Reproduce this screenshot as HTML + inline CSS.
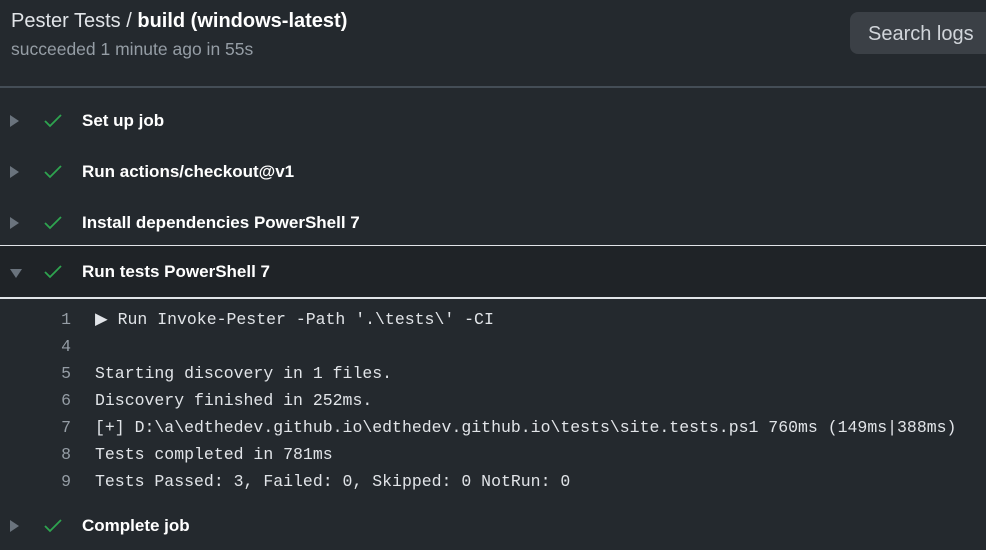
<!DOCTYPE html>
<html><head><style>
body{margin:0;width:986px;height:543px;background:#24292e;overflow:hidden;font-family:"Liberation Sans",sans-serif;position:relative}
.t{position:absolute;left:11px;top:10px;font-size:20px;color:#e1e4e8}
.t b{color:#fff}
.s{position:absolute;left:11px;top:39px;font-size:17.5px;color:#959da5}
.btn{position:absolute;left:850px;top:12px;width:150px;height:42px;background:#3b4046;border-radius:8px;color:#d1d5da;font-size:20px;line-height:44px;padding-left:18px;box-sizing:border-box}
.hr{position:absolute;left:0;top:86px;width:986px;height:2px;background:#444d56}
.row{position:absolute;left:0;width:986px;height:51px}
.row .tri{position:absolute;left:10px;top:21px;width:0;height:0;border-left:9px solid #6a737d;border-top:6px solid transparent;border-bottom:6px solid transparent}
.row .tri.d{left:10px;top:23px;border-top:9px solid #6a737d;border-left:6px solid transparent;border-right:6px solid transparent;border-bottom:0}
.row svg{position:absolute;left:43px;top:19px}
.row span{position:absolute;left:82px;top:17px;font-size:17px;font-weight:bold;color:#fff}
.open{background:#1f2327;border-top:1px solid #e1e4e8;border-bottom:2px solid #e1e4e8;box-sizing:border-box}
.open svg{top:18px}.open span{top:16px}
.log{position:absolute;left:0;top:306px;font-family:"Liberation Mono",monospace;font-size:16.5px;color:#e1e4e8}
.ln{position:absolute;height:27px;line-height:27px;white-space:pre}
.n{position:absolute;width:71px;text-align:right;color:#959da5}
.c{position:absolute;left:95px}
</style></head><body>
<div class="t">Pester Tests / <b>build (windows-latest)</b></div>
<div class="s">succeeded 1 minute ago in 55s</div>
<div class="btn">Search logs</div>
<div class="hr"></div>
<div class="row" style="top:94px"><div class="tri"></div><svg width="20" height="16" viewBox="0 0 20 16"><path d="M2 8l5 5L18 2" stroke="#2ea44f" stroke-width="1.8" fill="none"/></svg><span>Set up job</span></div>
<div class="row" style="top:145px"><div class="tri"></div><svg width="20" height="16" viewBox="0 0 20 16"><path d="M2 8l5 5L18 2" stroke="#2ea44f" stroke-width="1.8" fill="none"/></svg><span>Run actions/checkout@v1</span></div>
<div class="row" style="top:196px"><div class="tri"></div><svg width="20" height="16" viewBox="0 0 20 16"><path d="M2 8l5 5L18 2" stroke="#2ea44f" stroke-width="1.8" fill="none"/></svg><span>Install dependencies PowerShell 7</span></div>
<div class="row open" style="top:245px;height:54px"><div class="tri d"></div><svg width="20" height="16" viewBox="0 0 20 16"><path d="M2 8l5 5L18 2" stroke="#2ea44f" stroke-width="1.8" fill="none"/></svg><span>Run tests PowerShell 7</span></div>
<div class="log">
<div class="ln" style="top:0"><span class="n">1</span><span class="c">▶ Run Invoke-Pester -Path '.\tests\' -CI</span></div>
<div class="ln" style="top:27px"><span class="n">4</span></div>
<div class="ln" style="top:54px"><span class="n">5</span><span class="c">Starting discovery in 1 files.</span></div>
<div class="ln" style="top:81px"><span class="n">6</span><span class="c">Discovery finished in 252ms.</span></div>
<div class="ln" style="top:108px"><span class="n">7</span><span class="c">[+] D:\a\edthedev.github.io\edthedev.github.io\tests\site.tests.ps1 760ms (149ms|388ms)</span></div>
<div class="ln" style="top:135px"><span class="n">8</span><span class="c">Tests completed in 781ms</span></div>
<div class="ln" style="top:162px"><span class="n">9</span><span class="c">Tests Passed: 3, Failed: 0, Skipped: 0 NotRun: 0</span></div>
</div>
<div class="row" style="top:499px"><div class="tri"></div><svg width="20" height="16" viewBox="0 0 20 16"><path d="M2 8l5 5L18 2" stroke="#2ea44f" stroke-width="1.8" fill="none"/></svg><span>Complete job</span></div>
</body></html>
